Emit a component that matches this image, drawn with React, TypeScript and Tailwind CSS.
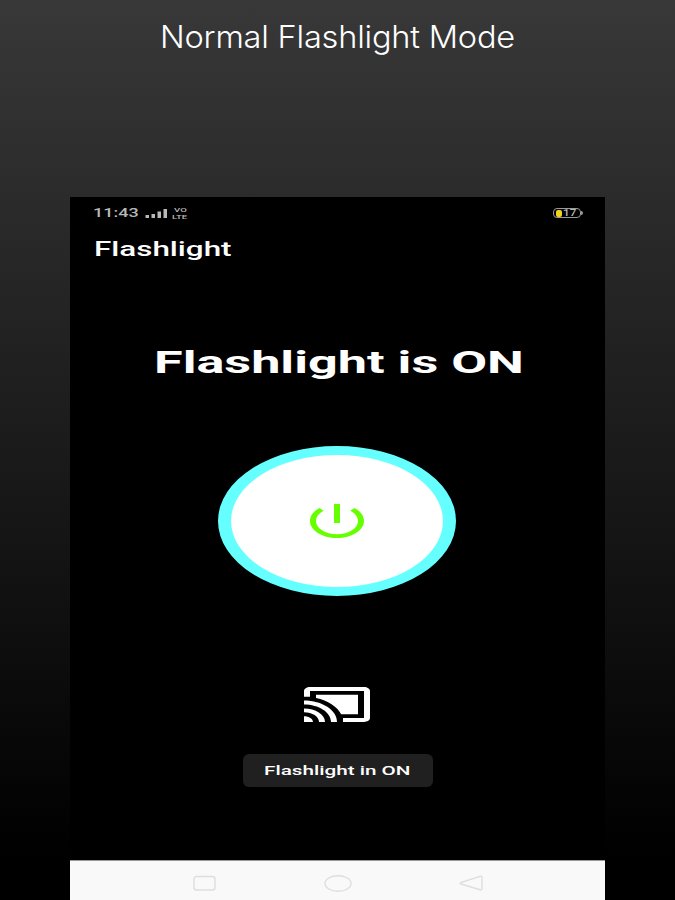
import React from "react"

interface WideTextProps {
  children: React.ReactNode
  className?: string
}

// Text stretched sideways from its left edge
const WideText: React.FC<WideTextProps> = ({ children, className = "" }) => {
  return (
    <span
      className={`block w-max origin-left whitespace-nowrap font-['Roboto',sans-serif] ${className}`}>
      {children}
    </span>
  )
}

const StatusBar: React.FC = () => {
  return (
    <div className="flex h-8 items-center justify-between pl-[23px] pr-[22px] text-[#b8b8b8]">
      <div className="flex items-center">
        <div className="w-[52px]">
          <WideText className="scale-x-[1.5] text-[12px] leading-4 font-medium">
            11:43
          </WideText>
        </div>
        <svg className="h-[11px] w-[23px]" viewBox="0 0 23 11" fill="currentColor">
          <rect x="0.5" y="7" width="3.5" height="3" />
          <rect x="6.5" y="6" width="3.5" height="4" />
          <rect x="12.5" y="3.5" width="3.5" height="6.5" />
          <rect x="18.5" y="1" width="3.5" height="9" />
        </svg>
        <div className="ml-[4px] w-4">
          <WideText className="ml-[2px] scale-x-[1.6] text-[6px] leading-[7px] font-medium">
            VO
          </WideText>
          <WideText className="scale-x-[1.6] text-[6px] leading-[7px] font-medium">
            LTE
          </WideText>
        </div>
      </div>
      <div className="flex items-center">
        <div className="flex h-[10px] w-[28px] items-center rounded-[4px] border border-[#9a9a9a] pl-[2px]">
          <div className="h-[7px] w-[6px] rounded-[2px] bg-[#f2d21c]" />
          <WideText className="ml-px scale-x-[1.3] text-[9px] leading-[8px] font-medium">
            17
          </WideText>
        </div>
        <div className="h-1 w-[2px] rounded-r-sm bg-[#9a9a9a]" />
      </div>
    </div>
  )
}

const PowerButton: React.FC = () => {
  return (
    <button className="ml-[148px] mt-[62px] flex h-[150px] w-[238px] items-center justify-center rounded-[50%] border-x-[13px] border-y-[9px] border-[#66ffff] bg-white">
      <svg
        className="h-[34px] w-[54px]"
        viewBox="3 3 18 18"
        preserveAspectRatio="none"
        fill="#66ff00">
        <path d="M13 3h-2v10h2V3zm4.83 2.17l-1.42 1.42C17.99 7.86 19 9.81 19 12c0 3.87-3.13 7-7 7s-7-3.13-7-7c0-2.19 1.01-4.14 2.58-5.42L6.17 5.17C4.23 6.82 3 9.26 3 12c0 4.97 4.03 9 9 9s9-4.03 9-9c0-2.74-1.23-5.18-3.17-6.83z" />
      </svg>
    </button>
  )
}

const CastIcon: React.FC = () => {
  return (
    <svg
      className="ml-[234px] mt-[91px] h-[35px] w-[66px]"
      viewBox="1 3 22 18"
      preserveAspectRatio="none"
      fill="white">
      <path d="M1 18v3h3c0-1.66-1.34-3-3-3zm0-4v2c2.76 0 5 2.24 5 5h2c0-3.87-3.13-7-7-7zm18-7H5v1.63c3.96 1.28 7.09 4.41 8.37 8.37H19V7zM1 10v2c4.97 0 9 4.03 9 9h2c0-6.08-4.93-11-11-11zm20-7H3c-1.1 0-2 .9-2 2v3h2V5h18v14h-7v2h7c1.1 0 2-.9 2-2V5c0-1.1-.9-2-2-2z" />
    </svg>
  )
}

const NavBar: React.FC = () => {
  return (
    <div className="mt-auto flex h-10 items-center border-t border-[#999] bg-[#f9f9f9] pt-[6px] pl-[122px]">
      <svg
        className="h-[18px] w-[294px]"
        viewBox="0 0 294 18"
        fill="none"
        stroke="#dedede"
        strokeWidth="1.4">
        <rect x="2" y="1.5" width="21" height="13.5" rx="2.5" />
        <ellipse cx="146" cy="8.5" rx="13" ry="7.8" />
        <path d="M269 7.5 L288 1.3 Q290 0.8 290 2.5 V13.5 Q290 15.2 288 14.7 L269 9 Q267 8.3 269 7.5z" />
      </svg>
    </div>
  )
}

const App: React.FC = () => {
  return (
    <div className="flex h-[900px] w-[675px] flex-col overflow-hidden bg-linear-to-b/srgb from-[#383838] to-black to-95%">
      <h1 className="mx-auto flex h-[197px] w-[354px] pt-[16px] text-white">
        <span className="-ml-px block w-max origin-left scale-x-[1.05] whitespace-nowrap font-['Inter',sans-serif] text-[31px] leading-[42px] font-light tracking-[-0.2px]">
          Normal Flashlight Mode
        </span>
      </h1>

      <main className="ml-[70px] flex h-[703px] w-[535px] flex-col bg-black text-white">
        <StatusBar />
        <div className="pt-2 pl-[24px]">
          <WideText className="scale-x-[1.57] text-[20px] leading-6 font-medium">
            Flashlight
          </WideText>
        </div>
        <div className="mt-[79px] pl-[84px]">
          <WideText className="scale-x-[1.63] text-[32px] leading-[44px] font-bold">
            Flashlight is ON
          </WideText>
        </div>
        <PowerButton />
        <CastIcon />
        <div className="mx-auto mt-8 flex h-[33px] w-[190px] items-center rounded-[6px] bg-[#202020] pl-[21px]">
          <WideText className="scale-x-[1.59] text-[13px] leading-5 font-medium">
            Flashlight in ON
          </WideText>
        </div>
        <NavBar />
      </main>
    </div>
  )
}

export default App
